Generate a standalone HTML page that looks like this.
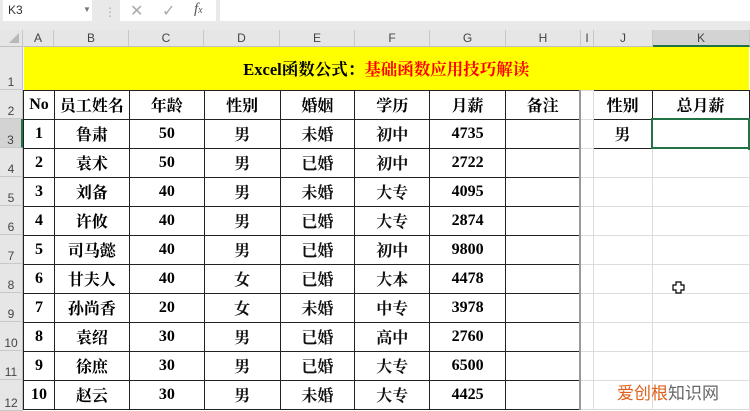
<!DOCTYPE html>
<html><head><meta charset="utf-8"><style>
*{margin:0;padding:0;box-sizing:border-box}
body{width:750px;height:411px;overflow:hidden;background:#fff;position:relative;font-family:"Liberation Serif","Noto Serif CJK SC",serif}
.a{position:absolute}
#fb{left:0;top:0;width:750px;height:30px;background:#e9e9e9}
.box{background:#fff;height:21px;top:0}
.ch{top:30px;height:17px;background:#e6e6e6;border-right:1px solid #c8c8c8;border-bottom:1px solid #c0c0c0;font:12px "Liberation Sans",sans-serif;color:#444;text-align:center;line-height:17px}
.rh{left:0;width:23px;background:#e6e6e6;border-bottom:1px solid #c8c8c8;border-right:1px solid #c0c0c0;font:12px "Liberation Sans",sans-serif;color:#444;text-align:center;display:flex;align-items:flex-end;justify-content:center;padding-bottom:0}
table{position:absolute;left:23px;top:47px;border-collapse:collapse;table-layout:fixed}
td{height:29px;border:1px solid #dcdcdc;text-align:center;font-size:16px;font-weight:bold;padding:0;overflow:hidden;white-space:nowrap;color:#000}
td.b{border:1px solid #222}
td.n{font-weight:bold;color:#111}
</style></head><body>
<div class="a" id="fb"></div>
<div class="a box" style="left:3px;width:89px;font:12px 'Liberation Sans',sans-serif;color:#333;padding:3px 5px">K3<span style="position:absolute;left:80px;top:5px;font-size:8px;color:#777">▼</span></div>
<div class="a" style="left:104px;top:5px;color:#aaa;font:12px sans-serif">⋮</div>
<div class="a box" style="left:120px;width:96px"><span class="a" style="left:10px;top:1px;color:#aaa;font:16px 'Liberation Sans',sans-serif">✕</span><span class="a" style="left:42px;top:1px;color:#aaa;font:16px 'Liberation Sans',sans-serif">✓</span><span class="a" style="left:74px;top:1px;color:#555;font:italic 15px 'Liberation Serif',serif">f<span style="font-size:10px">x</span></span></div>
<div class="a box" style="left:220px;width:530px"></div>
<div class="a ch" style="left:0;width:23px;background:#e6e6e6"><span style="position:absolute;right:3px;bottom:3px;width:0;height:0;border-left:10px solid transparent;border-bottom:10px solid #b8b8b8"></span></div>
<div class="a ch" style="left:23px;width:31px">A</div>
<div class="a ch" style="left:54px;width:75px">B</div>
<div class="a ch" style="left:129px;width:75px">C</div>
<div class="a ch" style="left:204px;width:76px">D</div>
<div class="a ch" style="left:280px;width:75px">E</div>
<div class="a ch" style="left:355px;width:75px">F</div>
<div class="a ch" style="left:430px;width:76px">G</div>
<div class="a ch" style="left:506px;width:75px">H</div>
<div class="a ch" style="left:581px;width:13px">I</div>
<div class="a ch" style="left:594px;width:59px">J</div>
<div class="a ch" style="left:653px;width:97px;background:#d3d3d3;border-bottom:2px solid #217346">K</div>
<div class="a rh" style="top:47px;height:43px">1</div>
<div class="a rh" style="top:90px;height:29px">2</div>
<div class="a rh" style="top:119px;height:29px;background:#d3d3d3;border-right:2px solid #217346">3</div>
<div class="a rh" style="top:148px;height:29px">4</div>
<div class="a rh" style="top:177px;height:29px">5</div>
<div class="a rh" style="top:206px;height:29px">6</div>
<div class="a rh" style="top:235px;height:29px">7</div>
<div class="a rh" style="top:264px;height:29px">8</div>
<div class="a rh" style="top:293px;height:29px">9</div>
<div class="a rh" style="top:322px;height:29px">10</div>
<div class="a rh" style="top:351px;height:29px">11</div>
<div class="a rh" style="top:380px;height:31px">12</div>
<table>
<colgroup><col style="width:31px"><col style="width:75px"><col style="width:75px"><col style="width:76px"><col style="width:75px"><col style="width:75px"><col style="width:76px"><col style="width:75px"><col style="width:13px"><col style="width:59px"><col style="width:97px"></colgroup>
<tr><td colspan="11" style="height:43px;background:#ffff00;border:none;font-size:16.5px">Excel函数公式：<span style="color:#f00">基础函数应用技巧解读</span></td></tr>
<tr><td class="b">No</td><td class="b">员工姓名</td><td class="b">年龄</td><td class="b">性别</td><td class="b">婚姻</td><td class="b">学历</td><td class="b">月薪</td><td class="b">备注</td><td style="border-left:2px solid #999"></td><td class="b">性别</td><td class="b">总月薪</td></tr>
<tr><td class="b">1</td><td class="b">鲁肃</td><td class="b">50</td><td class="b n">男</td><td class="b n">未婚</td><td class="b n">初中</td><td class="b">4735</td><td class="b"></td><td style="border-left:2px solid #999"></td><td class="b n">男</td><td style="border:2px solid #217346"></td></tr>
<tr><td class="b">2</td><td class="b">袁术</td><td class="b">50</td><td class="b n">男</td><td class="b n">已婚</td><td class="b n">初中</td><td class="b">2722</td><td class="b"></td><td style="border-left:2px solid #999"></td><td></td><td></td></tr>
<tr><td class="b">3</td><td class="b">刘备</td><td class="b">40</td><td class="b n">男</td><td class="b n">未婚</td><td class="b n">大专</td><td class="b">4095</td><td class="b"></td><td style="border-left:2px solid #999"></td><td></td><td></td></tr>
<tr><td class="b">4</td><td class="b">许攸</td><td class="b">40</td><td class="b n">男</td><td class="b n">已婚</td><td class="b n">大专</td><td class="b">2874</td><td class="b"></td><td style="border-left:2px solid #999"></td><td></td><td></td></tr>
<tr><td class="b">5</td><td class="b">司马懿</td><td class="b">40</td><td class="b n">男</td><td class="b n">已婚</td><td class="b n">初中</td><td class="b">9800</td><td class="b"></td><td style="border-left:2px solid #999"></td><td></td><td></td></tr>
<tr><td class="b">6</td><td class="b">甘夫人</td><td class="b">40</td><td class="b n">女</td><td class="b n">已婚</td><td class="b n">大本</td><td class="b">4478</td><td class="b"></td><td style="border-left:2px solid #999"></td><td></td><td></td></tr>
<tr><td class="b">7</td><td class="b">孙尚香</td><td class="b">20</td><td class="b n">女</td><td class="b n">未婚</td><td class="b n">中专</td><td class="b">3978</td><td class="b"></td><td style="border-left:2px solid #999"></td><td></td><td></td></tr>
<tr><td class="b">8</td><td class="b">袁绍</td><td class="b">30</td><td class="b n">男</td><td class="b n">已婚</td><td class="b n">高中</td><td class="b">2760</td><td class="b"></td><td style="border-left:2px solid #999"></td><td></td><td></td></tr>
<tr><td class="b">9</td><td class="b">徐庶</td><td class="b">30</td><td class="b n">男</td><td class="b n">已婚</td><td class="b n">大专</td><td class="b">6500</td><td class="b"></td><td style="border-left:2px solid #999"></td><td></td><td></td></tr>
<tr><td class="b">10</td><td class="b">赵云</td><td class="b">30</td><td class="b n">男</td><td class="b n">未婚</td><td class="b n">大专</td><td class="b">4425</td><td class="b"></td><td style="border-left:2px solid #999"></td><td></td><td></td></tr>
</table>
<div class="a" style="left:748px;top:146px;width:4px;height:4px;background:#217346"></div>
<svg class="a" style="left:672px;top:281px" width="13" height="13" viewBox="0 0 13 13"><path d="M4 1h5v3h3v5h-3v3h-5v-3h-3v-5h3z" fill="#fff" stroke="#000" stroke-width="1.2"/></svg>
<div class="a" style="left:617px;top:382px;font:17px 'Noto Sans CJK SC',sans-serif;color:#666;line-height:20px"><span style="color:#e0601c">爱创根</span>知识网</div>
</body></html>
